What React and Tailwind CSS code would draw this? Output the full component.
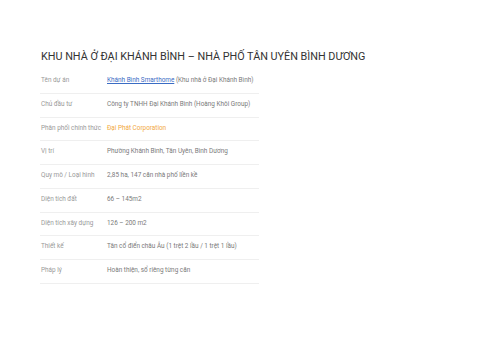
export default function App() {
  const rows = [
    ["Tên dự án", "link"],
    ["Chủ đầu tư", "Công ty TNHH Đại Khánh Bình (Hoàng Khôi Group)"],
    ["Phân phối chính thức", "orange"],
    ["Vị trí", "Phường Khánh Bình, Tân Uyên, Bình Dương"],
    ["Quy mô / Loại hình", "2,85 ha, 147 căn nhà phố liền kề"],
    ["Diện tích đất", "66 – 145m2"],
    ["Diện tích xây dựng", "126 – 200 m2"],
    ["Thiết kế", "Tân cổ điển châu Âu (1 trệt 2 lầu / 1 trệt 1 lầu)"],
    ["Pháp lý", "Hoàn thiện, sổ riêng từng căn"],
  ];
  return (
    <div className="w-[480px] h-[339px] bg-white pl-[41px] pt-[48px]" style={{ fontFamily: "Roboto, sans-serif" }}>
      <h1 className="text-[10.8px] leading-[16px] text-[#333] font-normal pt-[1px]">
        KHU NHÀ Ở ĐẠI KHÁNH BÌNH – NHÀ PHỐ TÂN UYÊN BÌNH DƯƠNG
      </h1>
      <div className="w-[219px] mt-[5px] -ml-[1px]">
        {rows.map(([k, v], i) => (
          <div key={i} className="flex h-[23.75px] border-b border-[#efefef] pt-[5px] text-[6.4px] leading-[10px]">
            <div className="w-[67px] pl-[1px] text-[#999]">{k}</div>
            <div className="flex-1 text-[#7a7a7a]">
              {v === "link" ? (
                <>
                  <span className="text-[#3a6cc4] underline">Khánh Bình Smarthome</span>{" "}
                  <span>(Khu nhà ở Đại Khánh Bình)</span>
                </>
              ) : v === "orange" ? (
                <span className="text-[#f2a83e]">Đại Phát Corporation</span>
              ) : (
                v
              )}
            </div>
          </div>
        ))}
      </div>
    </div>
  );
}
